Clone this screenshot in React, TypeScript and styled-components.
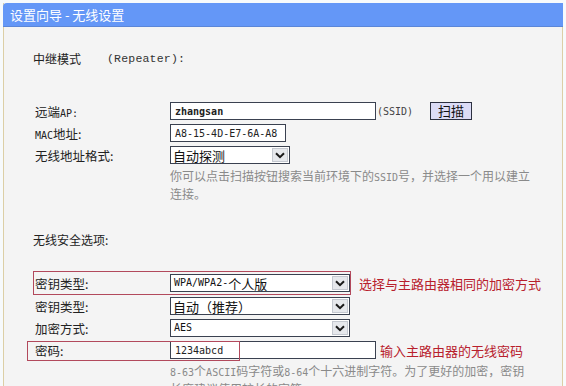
import React from "react";
import styled, { createGlobalStyle } from "styled-components";

const Global = createGlobalStyle`
  html, body { margin: 0; padding: 0; background: #fbfdfe; }
  body { font-family: "Noto Sans CJK SC", "DejaVu Sans", sans-serif; }
`;

const Page = styled.div`
  width: 566px;
  height: 386px;
  overflow: hidden;
  padding: 3px 3px 0 3px;
  box-sizing: border-box;
  background: #f7fafc;
`;

const Panel = styled.div`
  width: 560px;
  height: 383px;
  box-sizing: border-box;
  background: #f4f4f4;
  border-left: 1px solid #dccfa6;
  border-right: 1px solid #dccfa6;
  display: flex;
  flex-direction: column;
`;

const TitleBar = styled.div`
  height: 24px;
  margin-left: -1px;
  margin-right: -1px;
  background: #6497f7;
  border-top-left-radius: 4px;
  border-bottom: 1px solid #5b86d8;
  color: #fff;
  font-size: 13px;
  line-height: 24px;
  padding-left: 7px;
  box-sizing: border-box;
`;

const Content = styled.div`
  display: flex;
  flex-direction: column;
`;

const Heading = styled.div<{ $mt: number }>`
  margin-top: ${(p) => p.$mt}px;
  padding-left: 29px;
  height: 16px;
  display: flex;
  align-items: center;
  font-size: 12px;
  color: #222;
`;

const ModeNote = styled.span`
  font-family: "Liberation Mono", monospace;
  font-size: 11.5px;
  margin-left: 26px;
  color: #333;
  letter-spacing: 0.2px;
`;

const Row = styled.div<{ $h?: number; $mt?: number }>`
  position: relative;
  height: ${(p) => p.$h ?? 22}px;
  margin-top: ${(p) => p.$mt ?? 0}px;
  display: flex;
  align-items: center;
  padding-left: 31px;
`;

const Label = styled.div`
  width: 135px;
  flex: none;
  font-size: 12.5px;
  color: #222;
`;

const Latin = styled.span`
  font-family: "DejaVu Sans Mono", monospace;
  font-size: 10px;
  line-height: 1;
`;

const Field = styled.div<{ $w: number; $bold?: boolean }>`
  width: ${(p) => p.$w}px;
  height: 18px;
  box-sizing: border-box;
  border: 1px solid #3a4150;
  background: #fff;
  font-family: "DejaVu Sans Mono", monospace;
  font-size: 10px;
  font-weight: ${(p) => (p.$bold ? 700 : 400)};
  color: #222;
  padding-left: 4px;
  display: flex;
  align-items: center;
  flex: none;
`;

const Select = styled.div<{ $w: number }>`
  width: ${(p) => p.$w}px;
  height: 18px;
  box-sizing: border-box;
  border: 1px solid #3a4150;
  background: #fff;
  display: flex;
  align-items: stretch;
  flex: none;
`;

const SelectValue = styled.div<{ $cjk?: boolean }>`
  flex: 1;
  display: flex;
  align-items: center;
  padding-left: ${(p) => (p.$cjk ? 2 : 3)}px;
  font-size: 13px;
  color: #111;
  white-space: nowrap;
  overflow: hidden;
`;

const SelectArrow = styled.div`
  width: 18px;
  flex: none;
  box-sizing: border-box;
  border: 1px solid #fff;
  outline: 1px solid #c4c8d0;
  outline-offset: -2px;
  background: #e6e8ec;
  display: flex;
  align-items: center;
  justify-content: center;
`;

const Suffix = styled.span`
  font-family: "DejaVu Sans Mono", monospace;
  font-size: 10px;
  color: #444;
  margin-left: 1px;
`;

const ScanButton = styled.button`
  margin-left: 17px;
  width: 42px;
  height: 18px;
  padding: 0;
  box-sizing: border-box;
  border: 1px solid #2c3040;
  background: #dcdcf6;
  font-family: "Noto Sans CJK SC", sans-serif;
  font-size: 13px;
  line-height: 16px;
  color: #111;
`;

const Hint = styled.div<{ $mt?: number }>`
  margin-top: ${(p) => p.$mt ?? 0}px;
  margin-left: 166px;
  width: 364px;
  font-size: 12px;
  line-height: 18px;
  color: #8a8a8a;
`;

const Highlight = styled.div<{ $l: number; $t: number; $w: number; $h: number }>`
  position: absolute;
  left: ${(p) => p.$l}px;
  top: ${(p) => p.$t}px;
  width: ${(p) => p.$w}px;
  height: ${(p) => p.$h}px;
  box-sizing: border-box;
  border: 1.5px solid #b2495c;
  pointer-events: none;
`;

const Note = styled.span<{ $ml: number }>`
  margin-left: ${(p) => p.$ml}px;
  font-size: 13px;
  color: #b8202c;
  white-space: nowrap;
`;

const Chevron = () => (
  <svg width="10" height="7" viewBox="0 0 10 7">
    <path d="M1 1.2 L5 5.2 L9 1.2" fill="none" stroke="#1a1a1a" strokeWidth="2" />
  </svg>
);

const Dropdown = ({ w, value, cjk }: { w: number; value: React.ReactNode; cjk?: boolean }) => (
  <Select $w={w}>
    <SelectValue $cjk={cjk}>{value}</SelectValue>
    <SelectArrow>
      <Chevron />
    </SelectArrow>
  </Select>
);

export default function App() {
  return (
    <>
      <Global />
      <Page>
        <Panel>
          <TitleBar>设置向导 - 无线设置</TitleBar>
          <Content>
            <Heading $mt={23}>
              中继模式<ModeNote>(Repeater):</ModeNote>
            </Heading>
            <Row $mt={34}>
              <Label>
                远端<Latin>AP:</Latin>
              </Label>
              <Field $w={206} $bold>
                zhangsan
              </Field>
              <Suffix>(SSID)</Suffix>
              <ScanButton>扫描</ScanButton>
            </Row>
            <Row>
              <Label>
                <Latin>MAC</Latin>地址:
              </Label>
              <Field $w={116}>A8-15-4D-E7-6A-A8</Field>
            </Row>
            <Row>
              <Label>无线地址格式:</Label>
              <Dropdown w={120} value="自动探测" cjk />
            </Row>
            <Hint $mt={1}>
              你可以点击扫描按钮搜索当前环境下的<Latin>SSID</Latin>号，并选择一个用以建立连接。
            </Hint>
            <Heading $mt={28}>无线安全选项:</Heading>
            <Row $h={24} $mt={24}>
              <Highlight $l={29} $t={0} $w={318} $h={24} />
              <Label>密钥类型:</Label>
              <Dropdown
                w={180}
                value={
                  <>
                    <Latin>WPA/WPA2-</Latin>个人版
                  </>
                }
              />
              <Note $ml={9}>选择与主路由器相同的加密方式</Note>
            </Row>
            <Row>
              <Label>密钥类型:</Label>
              <Dropdown w={180} value="自动（推荐）" cjk />
            </Row>
            <Row>
              <Label>加密方式:</Label>
              <Dropdown w={180} value={<Latin>AES</Latin>} />
            </Row>
            <Row>
              <Highlight $l={23} $t={2} $w={213} $h={20} />
              <Label>密码:</Label>
              <Field $w={206}>1234abcd</Field>
              <Note $ml={4}>输入主路由器的无线密码</Note>
            </Row>
            <Hint $mt={1}>
              <Latin>8-63</Latin>个<Latin>ASCII</Latin>码字符或<Latin>8-64</Latin>
              个十六进制字符。为了更好的加密，密钥长度建议使用较长的字符。
            </Hint>
          </Content>
        </Panel>
      </Page>
    </>
  );
}
